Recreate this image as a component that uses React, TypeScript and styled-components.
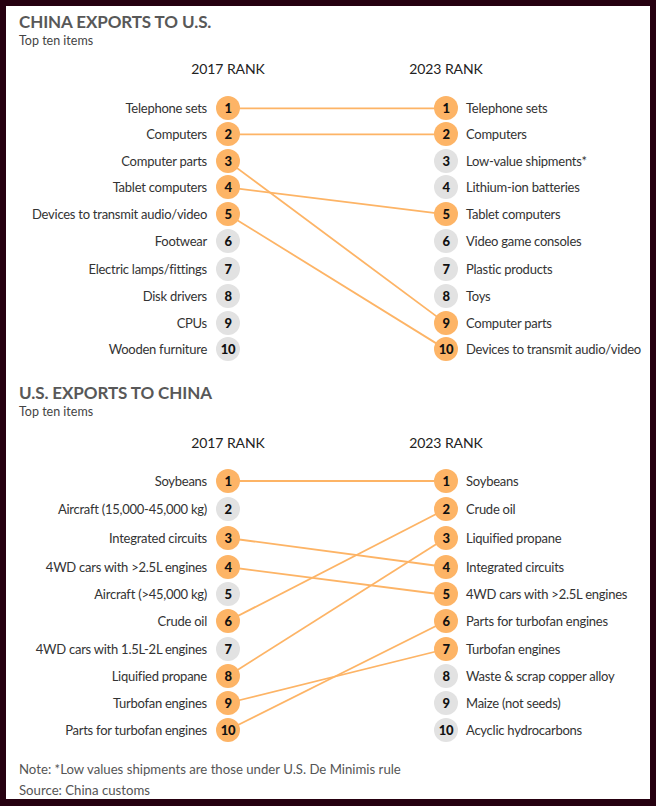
import React from "react";
import styled, { createGlobalStyle } from "styled-components";

const Global = createGlobalStyle`
  html, body { margin: 0; padding: 0; background: #260010; }
  body { font-family: Lato, "Noto Sans", sans-serif; }
`;

const Panel = styled.div`
  margin: 6px;
  width: 644px;
  height: 793px;
  box-sizing: border-box;
  background: #ffffff;
  padding: 6px 0 0 13px;
  display: flex;
  flex-direction: column;
`;

const Section = styled.section<{ $top: number }>`
  margin-top: ${(p) => p.$top}px;
  display: flex;
  flex-direction: column;
`;

const Title = styled.h2`
  margin: 0;
  font-size: 17px;
  line-height: 20px;
  font-weight: 700;
  color: #585858;
  letter-spacing: -0.1px;
`;

const Subtitle = styled.div`
  font-size: 12.5px;
  line-height: 16px;
  color: #444;
  margin-top: 1px;
`;

const Columns = "197px 24px 194px 24px 1fr";

const HeaderRow = styled.div<{ $top: number }>`
  display: grid;
  grid-template-columns: ${Columns};
  margin-top: ${(p) => p.$top}px;
  height: 18px;
`;

const RankHead = styled.div<{ $col: number }>`
  grid-column: ${(p) => p.$col};
  display: flex;
  justify-content: center;
  white-space: nowrap;
  font-size: 14px;
  line-height: 18px;
  color: #222;
  letter-spacing: -0.1px;
`;

const Chart = styled.div<{ $top: number; $rows: string }>`
  display: grid;
  grid-template-columns: ${Columns};
  grid-template-rows: ${(p) => p.$rows};
  margin-top: ${(p) => p.$top}px;
`;

const LeftLabel = styled.div<{ $r: number }>`
  grid-column: 1;
  grid-row: ${(p) => p.$r};
  align-self: center;
  text-align: right;
  padding-right: 9px;
  font-size: 13px;
  letter-spacing: -0.25px;
  color: #333;
  white-space: nowrap;
`;

const RightLabel = styled.div<{ $r: number }>`
  grid-column: 5;
  grid-row: ${(p) => p.$r};
  align-self: center;
  padding-left: 8px;
  font-size: 13px;
  letter-spacing: -0.25px;
  color: #333;
  white-space: nowrap;
`;

const Dot = styled.div<{ $r: number; $col: number; $on: boolean }>`
  grid-column: ${(p) => p.$col};
  grid-row: ${(p) => p.$r};
  align-self: center;
  position: relative;
  z-index: 1;
  width: 24px;
  height: 24px;
  border-radius: 50%;
  background: ${(p) => (p.$on ? "#fdb466" : "#e2e2e2")};
  display: flex;
  align-items: center;
  justify-content: center;
  font-size: 13px;
  font-weight: 900;
  color: #111;
  letter-spacing: -0.3px;
`;

const Lines = styled.svg`
  grid-column: 3;
  grid-row: 1 / -1;
  width: 194px;
  height: 100%;
  overflow: visible;
`;

const Note = styled.div<{ $top: number }>`
  margin-top: ${(p) => p.$top}px;
  font-size: 13.2px;
  line-height: 16px;
  color: #555;
`;

type Data = {
  title: string;
  left: string[];
  right: string[];
  links: [number, number][];
  top: number;
  headTop: number;
  rowsTop: number;
  centers: number[];
  edge: number;
};

const sections: Data[] = [
  {
    title: "CHINA EXPORTS TO U.S.",
    left: [
      "Telephone sets",
      "Computers",
      "Computer parts",
      "Tablet computers",
      "Devices to transmit audio/video",
      "Footwear",
      "Electric lamps/fittings",
      "Disk drivers",
      "CPUs",
      "Wooden furniture",
    ],
    right: [
      "Telephone sets",
      "Computers",
      "Low-value shipments*",
      "Lithium-ion batteries",
      "Tablet computers",
      "Video game consoles",
      "Plastic products",
      "Toys",
      "Computer parts",
      "Devices to transmit audio/video",
    ],
    links: [
      [1, 1],
      [2, 2],
      [3, 9],
      [4, 5],
      [5, 10],
    ],
    top: 0,
    headTop: 11,
    rowsTop: 16.6,
    centers: [108, 134, 161, 187, 214, 241, 269, 296, 323, 349],
    edge: 13.4,
  },
  {
    title: "U.S. EXPORTS TO CHINA",
    left: [
      "Soybeans",
      "Aircraft (15,000-45,000 kg)",
      "Integrated circuits",
      "4WD cars with >2.5L engines",
      "Aircraft (>45,000 kg)",
      "Crude oil",
      "4WD cars with 1.5L-2L engines",
      "Liquified propane",
      "Turbofan engines",
      "Parts for turbofan engines",
    ],
    right: [
      "Soybeans",
      "Crude oil",
      "Liquified propane",
      "Integrated circuits",
      "4WD cars with >2.5L engines",
      "Parts for turbofan engines",
      "Turbofan engines",
      "Waste & scrap copper alloy",
      "Maize (not seeds)",
      "Acyclic hydrocarbons",
    ],
    links: [
      [1, 1],
      [3, 4],
      [4, 5],
      [6, 2],
      [8, 3],
      [9, 7],
      [10, 6],
    ],
    top: 20.6,
    headTop: 14,
    rowsTop: 15,
    centers: [481, 509, 538, 567, 595, 621, 649, 676, 703, 730],
    edge: 14,
  },
];

function rowLayout(centers: number[], edge: number) {
  const bounds: number[] = [centers[0] - edge];
  for (let i = 0; i < centers.length - 1; i++) {
    bounds.push((centers[i] + centers[i + 1]) / 2);
  }
  bounds.push(centers[centers.length - 1] + edge);
  const heights = bounds.slice(1).map((b, i) => b - bounds[i]);
  const rel = centers.map((c) => c - bounds[0]);
  const total = bounds[bounds.length - 1] - bounds[0];
  return { rows: heights.map((h) => `${h}px`).join(" "), rel, total };
}

function RankChart({ s }: { s: Data }) {
  const leftOn = new Set(s.links.map((l) => l[0]));
  const rightOn = new Set(s.links.map((l) => l[1]));
  const { rows, rel, total } = rowLayout(s.centers, s.edge);
  return (
    <Section $top={s.top}>
      <Title>{s.title}</Title>
      <Subtitle>Top ten items</Subtitle>
      <HeaderRow $top={s.headTop}>
        <RankHead $col={2}>
          <span>2017 RANK</span>
        </RankHead>
        <RankHead $col={4}>
          <span>2023 RANK</span>
        </RankHead>
      </HeaderRow>
      <Chart $top={s.rowsTop} $rows={rows}>
        <Lines viewBox={`0 0 194 ${total}`} preserveAspectRatio="none">
          {s.links.map(([a, b]) => (
            <line
              key={`${a}-${b}`}
              x1={-12}
              y1={rel[a - 1]}
              x2={206}
              y2={rel[b - 1]}
              stroke="#fdb466"
              strokeWidth={1.8}
            />
          ))}
        </Lines>
        {s.left.map((t, i) => (
          <React.Fragment key={`l${i}`}>
            <LeftLabel $r={i + 1}>{t}</LeftLabel>
            <Dot $r={i + 1} $col={2} $on={leftOn.has(i + 1)}>
              {i + 1}
            </Dot>
          </React.Fragment>
        ))}
        {s.right.map((t, i) => (
          <React.Fragment key={`r${i}`}>
            <Dot $r={i + 1} $col={4} $on={rightOn.has(i + 1)}>
              {i + 1}
            </Dot>
            <RightLabel $r={i + 1}>{t}</RightLabel>
          </React.Fragment>
        ))}
      </Chart>
    </Section>
  );
}

export default function App() {
  return (
    <>
      <Global />
      <Panel>
        {sections.map((s) => (
          <RankChart key={s.title} s={s} />
        ))}
        <Note $top={17}>Note: *Low values shipments are those under U.S. De Minimis rule</Note>
        <Note $top={5}>Source: China customs</Note>
      </Panel>
    </>
  );
}
